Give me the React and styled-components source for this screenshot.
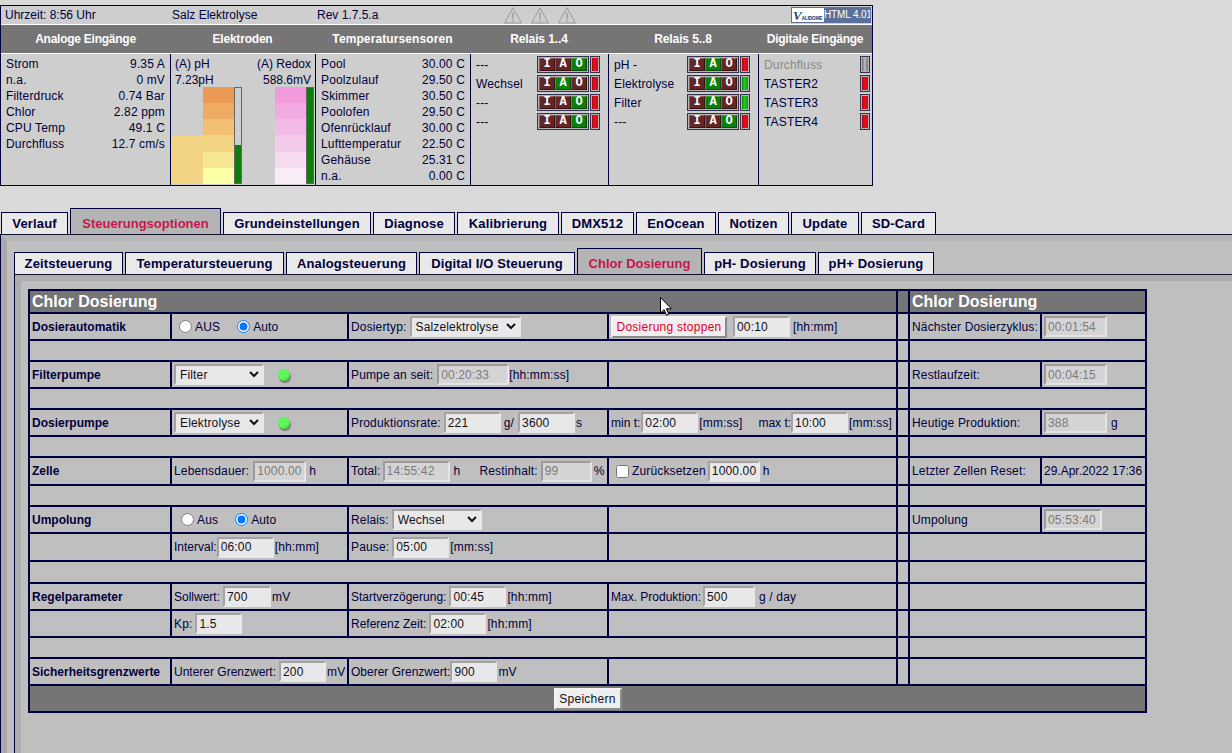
import React from "react";
import styled, { createGlobalStyle } from "styled-components";

const NAVY = "#00003c";

const Global = createGlobalStyle`
  html, body {
    margin: 0;
    height: 100%;
    overflow: hidden;
    background: #d9d9d9;
  }
  body {
    padding-top: 5px;
    box-sizing: border-box;
    font: 12px "Liberation Sans", Arial, sans-serif;
    color: ${NAVY};
  }
`;

/* ---------- status panel ---------- */

const StatusPanel = styled.div`
  width: 871px;
  height: 179px;
  border: 1px solid ${NAVY};
  background: #cecece;
`;

const columns = "169px 145px 155px 138px 150px 114px";

const InfoRow = styled.div`
  display: grid;
  grid-template-columns: ${columns};
  height: 18px;
  align-items: center;
  border-bottom: 1px solid #fff;
`;

const InfoText = styled.div`
  padding-left: ${(p) => p.$pad ?? 2}px;
`;

const Warnings = styled.div`
  display: flex;
  gap: 9px;
  padding-left: 34px;
`;

const Badge = styled.div`
  display: flex;
  justify-self: end;
  width: 78px;
  height: 14px;
  margin-right: 1px;
  border: 1px solid #5a7098;
  background: #fff;
  overflow: hidden;
`;

const BadgeLogo = styled.div`
  flex: 1;
  min-width: 0;
  display: flex;
  align-items: flex-end;
  padding-left: 1px;
  overflow: hidden;
  font-size: 5px;
  font-weight: bold;
  letter-spacing: -0.3px;
  line-height: 8px;
  color: #27406e;
  b {
    font: italic bold 13px/13px "Liberation Serif", serif;
  }
`;

const BadgeText = styled.div`
  flex: none;
  width: 46px;
  background: #5a7098;
  color: #fff;
  font-size: 10px;
  letter-spacing: -0.15px;
  line-height: 14px;
  text-align: center;
  white-space: nowrap;
`;

const HeadRow = styled.div`
  display: grid;
  grid-template-columns: ${columns};
  height: 28px;
  align-items: center;
  background: #757575;
  border-bottom: 1px solid #fff;
  color: #fff;
  font-weight: bold;
  text-align: center;
`;

const HeadLabel = styled.div`
  letter-spacing: ${(p) => p.$ls}px;
`;

const PanelBody = styled.div`
  display: grid;
  grid-template-columns: ${columns};
  height: 131px;
`;

const PanelCol = styled.div`
  box-sizing: border-box;
  border-left: ${(p) => (p.$first ? "none" : `1px solid ${NAVY}`)};
  padding: ${(p) => p.$pad || "2px 5px 0"};
  min-width: 0;
  letter-spacing: 0.15px;
`;

const ValueRow = styled.div`
  display: flex;
  justify-content: space-between;
  height: 16px;
  line-height: 16px;
`;

const ElectrodeCol = styled(PanelCol)`
  display: flex;
  flex-direction: column;
  letter-spacing: 0;
`;

const ElectrodeText = styled(ValueRow)`
  padding: 0 4px;
  line-height: 18px;
`;

const Gauges = styled.div`
  display: grid;
  grid-template-columns: 32px 31px 8px 33px 31px 8px;
  height: 97px;
`;

const Steps = styled.div`
  display: flex;
  flex-direction: column;
  justify-content: flex-end;
`;

const Step = styled.div`
  flex: ${(p) => (p.$fixed ? "none" : 1)};
  height: ${(p) => (p.$fixed ? "48px" : "auto")};
  background: ${(p) => p.$color};
`;

const Meter = styled.div`
  box-sizing: border-box;
  display: flex;
  align-items: flex-end;
  border: 1px solid #666;
  background: #cecece;
`;

const MeterFill = styled.div`
  width: 100%;
  background: #0a7f0a;
`;

const RelayList = styled.div`
  display: flex;
  flex-direction: column;
  gap: 2px;
`;

const RelayRow = styled.div`
  display: flex;
  justify-content: space-between;
  align-items: center;
  height: 17px;
  color: ${(p) => (p.$muted ? "#888" : NAVY)};
`;

const RelayControls = styled.div`
  display: flex;
  gap: 1px;
`;

const ModeBox = styled.div`
  box-sizing: border-box;
  display: flex;
  width: 52px;
  height: 17px;
  padding: 1px;
  border: 1px solid #33334f;
  background: #b4b4b4;
`;

const ModeKey = styled.div`
  box-sizing: border-box;
  flex: 1;
  height: 13px;
  border: 1px solid;
  border-color: ${(p) =>
    p.$on ? "#3fa03f #064c06 #064c06 #3fa03f" : "#8f5a5a #3a1212 #3a1212 #8f5a5a"};
  background: ${(p) => (p.$on ? "#0b7f0b" : "#622626")};
  color: #fff;
  font: bold 12px/11px "Liberation Mono", monospace;
  letter-spacing: 0;
  text-align: center;
`;

const LedBox = styled.div`
  box-sizing: border-box;
  width: 10px;
  height: 17px;
  padding: 1px;
  border: 1px solid #33334f;
  background: #b4b4b4;
`;

const ledColors = {
  red: "#a00a12, #ee0c1e 40%, #c80a16",
  green: "#0a8a0a, #22cc22 40%, #0e9a0e",
  gray: "#666, #b8b8b8 40%, #7a7a7a",
};

const LedBar = styled.div`
  height: 100%;
  background: linear-gradient(to right, ${(p) => ledColors[p.$color]});
`;

/* ---------- tabs ---------- */

const TabBar = styled.div`
  display: flex;
  align-items: flex-end;
  gap: 2px;
  height: ${(p) => p.$height}px;
  padding-left: ${(p) => p.$inset}px;
  margin-top: ${(p) => p.$top}px;
`;

const Tab = styled.div`
  box-sizing: border-box;
  width: ${(p) => p.$w}px;
  height: ${(p) => (p.$active ? 26 : 22)}px;
  border: 1px solid ${NAVY};
  border-bottom: none;
  background: ${(p) => (p.$active ? "#b4b4b4" : "#e9e9e9")};
  color: ${(p) => (p.$active ? "#c8144f" : NAVY)};
  font-size: 13px;
  font-weight: bold;
  letter-spacing: ${(p) => (p.$active ? 0 : 0.15)}px;
  line-height: ${(p) => (p.$active ? 30 : 22)}px;
  text-align: center;
  white-space: nowrap;
`;

const Frame = styled.div`
  border-top: 1px solid #10102a;
  border-left: 1px solid ${NAVY};
`;

const OuterBody = styled.div`
  height: 518px;
  box-sizing: border-box;
  border-top: 6px solid #b6b6b6;
  border-left: 6px solid #aaa;
  background: #bfbfbf;
  padding-left: 7px;
  overflow: hidden;
`;

const InnerBody = styled.div`
  height: 478px;
  box-sizing: border-box;
  border-top: 6px solid #adadad;
  border-left: 6px solid #adadad;
  background: #bfbfbf;
  padding: 8px 0 0 7px;
`;

/* ---------- dosing table ---------- */

const DoseGrid = styled.div`
  display: grid;
  width: 1119px;
  box-sizing: border-box;
  grid-template-columns: 140px 175px 258px 287px 10px 130px 103px;
  grid-template-rows: 21px 25px 19px 25px 19px 25px 19px 26px 19px 25px 26px 20px 25px 25px 19px 25px 25px;
  gap: 2px;
  padding: 2px;
  background: ${NAVY};
`;

const Cell = styled.div`
  display: flex;
  align-items: center;
  padding: 0 2px;
  min-width: 0;
  white-space: nowrap;
  background: #bfbfbf;
  letter-spacing: ${(p) => (p.$tight ? 0 : 0.15)}px;
  grid-column: ${(p) => p.$span || "auto"};
`;

const TitleCell = styled(Cell)`
  font-weight: bold;
  letter-spacing: 0;
`;

const GridHead = styled(Cell)`
  background: #757575;
  color: #fff;
  font-size: 16px;
  font-weight: bold;
  letter-spacing: 0;
`;

const GridFoot = styled(Cell)`
  grid-column: 1 / -1;
  justify-content: center;
  background: #757575;
`;

const Text = styled.span`
  margin-left: ${(p) => p.$ml || 0}px;
  letter-spacing: ${(p) => (p.$tight ? 0 : 0.15)}px;
`;

const Field = styled.input`
  box-sizing: border-box;
  width: ${(p) => p.$w}px;
  height: 21px;
  margin: 0 0 0 ${(p) => p.$ml ?? 3}px;
  padding: 0 2px;
  border: 2px solid;
  border-color: ${(p) =>
    p.disabled ? "#9b9b9b #e4e4e4 #e4e4e4 #9b9b9b" : "#a3a3a3 #e8e8e8 #e8e8e8 #a3a3a3"};
  background: ${(p) => (p.disabled ? "#d4d4d4" : "#e8e8e8")};
  color: ${(p) => (p.disabled ? "#7a7a7a" : "#10101a")};
  font: 12px "Liberation Sans", Arial, sans-serif;
  letter-spacing: 0.15px;
  opacity: 1;
`;

const Picker = styled.select`
  box-sizing: border-box;
  width: ${(p) => p.$w}px;
  height: 21px;
  margin: 0 0 0 ${(p) => p.$ml ?? 3}px;
  border: 2px solid;
  border-color: #a3a3a3 #e8e8e8 #e8e8e8 #a3a3a3;
  border-radius: 0;
  background-color: #e8e8e8;
  color: #10101a;
  font: 12px "Liberation Sans", Arial, sans-serif;
  letter-spacing: 0.15px;
`;

const RadioGroup = styled.label`
  display: flex;
  align-items: center;
  gap: 3px;
  margin-left: ${(p) => p.$ml}px;
  input {
    margin: 0;
  }
`;

const Tick = styled.input`
  width: 13px;
  height: 13px;
  margin: 0 3px 0 ${(p) => p.$ml}px;
`;

const Lamp = styled.span`
  width: 12px;
  height: 12px;
  margin-left: 14px;
  border-radius: 50%;
  background: radial-gradient(circle at 45% 40%, #5cf85c 0 50%, #38dc38 68%, #7f9f7f 90%);
  box-shadow: 1px 2px 1px #7a7a7a;
`;

const PushButton = styled.button`
  box-sizing: border-box;
  height: 22px;
  width: ${(p) => p.$w}px;
  padding: 0;
  border: 2px solid;
  border-color: #f4f4f4 #8c8c8c #8c8c8c #f4f4f4;
  background: #efefef;
  color: ${(p) => (p.$danger ? "#e4002b" : "#10101a")};
  font: 12px "Liberation Sans", Arial, sans-serif;
  letter-spacing: 0.25px;
`;

const Pointer = styled.svg`
  position: absolute;
  left: 660px;
  top: 297px;
`;

/* ---------- small parts ---------- */

const Warning = () => (
  <svg width="18" height="17" viewBox="0 0 18 17">
    <path d="M9 .8 17.4 16H.6Z" fill="none" stroke="#9a9a9a" />
    <path d="M9 5.5v6.5M9 13v1.6" stroke="#9a9a9a" strokeWidth="1.4" />
  </svg>
);

const Relay = ({ name, mode, led, muted }) => (
  <RelayRow $muted={muted}>
    <span>{name}</span>
    <RelayControls>
      <ModeBox>
        {["I", "A", "O"].map((key) => (
          <ModeKey key={key} $on={key === mode}>
            {key}
          </ModeKey>
        ))}
      </ModeBox>
      <LedBox>
        <LedBar $color={led} />
      </LedBox>
    </RelayControls>
  </RelayRow>
);

const Input = ({ value, w, ml, off }) => (
  <Field defaultValue={value} $w={w} $ml={ml} disabled={off} />
);

const Select = ({ value, w, ml }) => (
  <Picker defaultValue={value} $w={w} $ml={ml}>
    <option>{value}</option>
  </Picker>
);

const heads = [
  ["Analoge Eingänge", -0.25],
  ["Elektroden", -0.2],
  ["Temperatursensoren", 0.1],
  ["Relais 1..4", -0.1],
  ["Relais 5..8", -0.1],
  ["Digitale Eingänge", -0.25],
];

const analog = [
  ["Strom", "9.35 A"],
  ["n.a.", "0 mV"],
  ["Filterdruck", "0.74 Bar"],
  ["Chlor", "2.82 ppm"],
  ["CPU Temp", "49.1 C"],
  ["Durchfluss", "12.7 cm/s"],
];

const temps = [
  ["Pool", "30.00 C"],
  ["Poolzulauf", "29.50 C"],
  ["Skimmer", "30.50 C"],
  ["Poolofen", "29.50 C"],
  ["Ofenrücklauf", "30.00 C"],
  ["Lufttemperatur", "22.50 C"],
  ["Gehäuse", "25.31 C"],
  ["n.a.", "0.00 C"],
];

const relays1 = [
  ["---", "O", "red"],
  ["Wechsel", "A", "red"],
  ["---", "O", "red"],
  ["---", "O", "red"],
];

const relays2 = [
  ["pH -", "A", "red"],
  ["Elektrolyse", "A", "green"],
  ["Filter", "A", "green"],
  ["---", "O", "red"],
];

const inputsDigital = ["TASTER2", "TASTER3", "TASTER4"];

const phSteps = ["#eb9a56", "#eeab64", "#f1c073", "#f3d384", "#f6e795", "#fbffa8"];
const redoxSteps = ["#f19bdc", "#f0abe0", "#f2bbe5", "#f2cbe9", "#f5dcf0", "#f8ecf6"];

const mainTabs = [
  ["Verlauf", 67],
  ["Steuerungsoptionen", 151, true],
  ["Grundeinstellungen", 148],
  ["Diagnose", 82],
  ["Kalibrierung", 102],
  ["DMX512", 73],
  ["EnOcean", 80],
  ["Notizen", 71],
  ["Update", 68],
  ["SD-Card", 75],
];

const subTabs = [
  ["Zeitsteuerung", 109],
  ["Temperatursteuerung", 159],
  ["Analogsteuerung", 131],
  ["Digital I/O Steuerung", 156],
  ["Chlor Dosierung", 125, true],
  ["pH- Dosierung", 112],
  ["pH+ Dosierung", 116],
];

const GapRow = () => (
  <>
    <Cell $span="span 4" />
    <Cell />
    <Cell $span="span 2" />
  </>
);

const Side = ({ children }) => (
  <>
    <Cell />
    <Cell $span="span 2">{children}</Cell>
  </>
);

export default function App() {
  return (
    <>
      <Global />
      <StatusPanel>
        <InfoRow>
          <InfoText $pad={4}>Uhrzeit: 8:56 Uhr</InfoText>
          <InfoText>Salz Elektrolyse</InfoText>
          <InfoText>Rev 1.7.5.a</InfoText>
          <Warnings>
            <Warning />
            <Warning />
            <Warning />
          </Warnings>
          <span />
          <Badge>
            <BadgeLogo>
              <b>V</b>ALIDOME
            </BadgeLogo>
            <BadgeText>HTML 4.01</BadgeText>
          </Badge>
        </InfoRow>
        <HeadRow>
          {heads.map(([label, ls]) => (
            <HeadLabel key={label} $ls={ls}>
              {label}
            </HeadLabel>
          ))}
        </HeadRow>
        <PanelBody>
          <PanelCol $first>
            {analog.map(([label, value]) => (
              <ValueRow key={label}>
                <span>{label}</span>
                <span>{value}</span>
              </ValueRow>
            ))}
          </PanelCol>
          <ElectrodeCol $pad="1px 0 0">
            <ElectrodeText>
              <span>(A) pH</span>
              <span>(A) Redox</span>
            </ElectrodeText>
            <ElectrodeText>
              <span>7.23pH</span>
              <span>588.6mV</span>
            </ElectrodeText>
            <Gauges>
              <Steps>
                <Step $fixed $color="#f3d384" />
              </Steps>
              <Steps>
                {phSteps.map((color) => (
                  <Step key={color} $color={color} />
                ))}
              </Steps>
              <Meter>
                <MeterFill style={{ height: "40%" }} />
              </Meter>
              <span />
              <Steps>
                {redoxSteps.map((color) => (
                  <Step key={color} $color={color} />
                ))}
              </Steps>
              <Meter>
                <MeterFill style={{ height: "100%" }} />
              </Meter>
            </Gauges>
          </ElectrodeCol>
          <PanelCol>
            {temps.map(([label, value], i) => (
              <ValueRow key={i}>
                <span>{label}</span>
                <span>{value}</span>
              </ValueRow>
            ))}
          </PanelCol>
          <PanelCol $pad="2px 8px 0 5px">
            <RelayList>
              {relays1.map(([name, mode, led], i) => (
                <Relay key={i} name={name} mode={mode} led={led} />
              ))}
            </RelayList>
          </PanelCol>
          <PanelCol $pad="2px 8px 0 5px">
            <RelayList>
              {relays2.map(([name, mode, led], i) => (
                <Relay key={i} name={name} mode={mode} led={led} />
              ))}
            </RelayList>
          </PanelCol>
          <PanelCol $pad="2px 2px 0 5px">
            <RelayList>
              <RelayRow $muted>
                <span>Durchfluss</span>
                <LedBox>
                  <LedBar $color="gray" />
                </LedBox>
              </RelayRow>
              {inputsDigital.map((name) => (
                <RelayRow key={name}>
                  <span>{name}</span>
                  <LedBox>
                    <LedBar $color="red" />
                  </LedBox>
                </RelayRow>
              ))}
            </RelayList>
          </PanelCol>
        </PanelBody>
      </StatusPanel>

      <TabBar $height={26} $inset={1} $top={22}>
        {mainTabs.map(([label, w, active]) => (
          <Tab key={label} $w={w} $active={active}>
            {label}
          </Tab>
        ))}
      </TabBar>
      <Frame>
        <OuterBody>
          <TabBar $height={26} $inset={0} $top={7}>
            {subTabs.map(([label, w, active]) => (
              <Tab key={label} $w={w} $active={active}>
                {label}
              </Tab>
            ))}
          </TabBar>
          <Frame>
            <InnerBody>
              <DoseGrid>
                <GridHead $span="span 4">Chlor Dosierung</GridHead>
                <GridHead />
                <GridHead $span="span 2">Chlor Dosierung</GridHead>

                <TitleCell>Dosierautomatik</TitleCell>
                <Cell>
                  <RadioGroup $ml={5}>
                    <input type="radio" name="dose" />
                    AUS
                  </RadioGroup>
                  <RadioGroup $ml={17}>
                    <input type="radio" name="dose" defaultChecked />
                    Auto
                  </RadioGroup>
                </Cell>
                <Cell>
                  Dosiertyp:
                  <Select value="Salzelektrolyse" w={111} />
                </Cell>
                <Cell>
                  <PushButton $danger $w={116}>
                    Dosierung stoppen
                  </PushButton>
                  <Input value="00:10" w={57} ml={6} />
                  <Text $ml={3}>[hh:mm]</Text>
                </Cell>
                <Cell />
                <Cell>Nächster Dosierzyklus:</Cell>
                <Cell>
                  <Input value="00:01:54" w={63} ml={0} off />
                </Cell>

                <GapRow />

                <TitleCell>Filterpumpe</TitleCell>
                <Cell>
                  <Select value="Filter" w={90} ml={0} />
                  <Lamp />
                </Cell>
                <Cell>
                  Pumpe an seit:
                  <Input value="00:20:33" w={72} ml={4} off />
                  <Text>[hh:mm:ss]</Text>
                </Cell>
                <Cell />
                <Cell />
                <Cell>Restlaufzeit:</Cell>
                <Cell>
                  <Input value="00:04:15" w={63} ml={0} off />
                </Cell>

                <GapRow />

                <TitleCell>Dosierpumpe</TitleCell>
                <Cell>
                  <Select value="Elektrolyse" w={90} ml={0} />
                  <Lamp />
                </Cell>
                <Cell>
                  Produktionsrate:
                  <Input value="221" w={57} ml={3} />
                  <Text $ml={3}>g/</Text>
                  <Input value="3600" w={57} ml={4} />
                  <Text $ml={1}>s</Text>
                </Cell>
                <Cell $tight>
                  min t:
                  <Input value="02:00" w={57} ml={1} />
                  <Text $ml={1}>[mm:ss]</Text>
                  <Text $ml={16} $tight>
                    max t:
                  </Text>
                  <Input value="10:00" w={57} ml={0} />
                  <Text $ml={1}>[mm:ss]</Text>
                </Cell>
                <Cell />
                <Cell>Heutige Produktion:</Cell>
                <Cell>
                  <Input value="388" w={63} ml={0} off />
                  <Text $ml={4}>g</Text>
                </Cell>

                <GapRow />

                <TitleCell>Zelle</TitleCell>
                <Cell>
                  Lebensdauer:
                  <Input value="1000.00" w={53} ml={4} off />
                  <Text $ml={3}>h</Text>
                </Cell>
                <Cell>
                  Total:
                  <Input value="14:55:42" w={67} ml={2} off />
                  <Text $ml={4}>h</Text>
                  <Text $ml={19}>Restinhalt:</Text>
                  <Input value="99" w={51} ml={3} off />
                  <Text $ml={2}>%</Text>
                </Cell>
                <Cell>
                  <Tick type="checkbox" $ml={5} />
                  Zurücksetzen
                  <Input value="1000.00" w={52} ml={2} />
                  <Text $ml={3}>h</Text>
                </Cell>
                <Cell />
                <Cell>Letzter Zellen Reset:</Cell>
                <Cell $tight>29.Apr.2022 17:36</Cell>

                <GapRow />

                <TitleCell>Umpolung</TitleCell>
                <Cell>
                  <RadioGroup $ml={7}>
                    <input type="radio" name="flip" />
                    Aus
                  </RadioGroup>
                  <RadioGroup $ml={17}>
                    <input type="radio" name="flip" defaultChecked />
                    Auto
                  </RadioGroup>
                </Cell>
                <Cell>
                  Relais:
                  <Select value="Wechsel" w={90} />
                </Cell>
                <Cell />
                <Cell />
                <Cell>Umpolung</Cell>
                <Cell>
                  <Input value="05:53:40" w={58} ml={0} off />
                </Cell>

                <Cell />
                <Cell $tight>
                  Interval:
                  <Input value="06:00" w={57} ml={0} />
                  <Text $ml={1}>[hh:mm]</Text>
                </Cell>
                <Cell>
                  Pause:
                  <Input value="05:00" w={57} />
                  <Text $ml={1}>[mm:ss]</Text>
                </Cell>
                <Cell />
                <Side />

                <GapRow />

                <TitleCell>Regelparameter</TitleCell>
                <Cell $tight>
                  Sollwert:
                  <Input value="700" w={48} />
                  <Text $ml={1}>mV</Text>
                </Cell>
                <Cell $tight>
                  Startverzögerung:
                  <Input value="00:45" w={57} />
                  <Text $ml={1}>[hh:mm]</Text>
                </Cell>
                <Cell $tight>
                  Max. Produktion:
                  <Input value="500" w={52} ml={2} />
                  <Text $ml={4}>g / day</Text>
                </Cell>
                <Side />

                <Cell />
                <Cell>
                  Kp:
                  <Input value="1.5" w={47} />
                </Cell>
                <Cell $tight>
                  Referenz Zeit:
                  <Input value="02:00" w={57} />
                  <Text $ml={1}>[hh:mm]</Text>
                </Cell>
                <Cell />
                <Side />

                <GapRow />

                <TitleCell>Sicherheitsgrenzwerte</TitleCell>
                <Cell $tight>
                  Unterer Grenzwert:
                  <Input value="200" w={47} />
                  <Text $ml={1}>mV</Text>
                </Cell>
                <Cell $tight>
                  Oberer Grenzwert:
                  <Input value="900" w={47} ml={0} />
                  <Text $ml={1}>mV</Text>
                </Cell>
                <Cell />
                <Side />

                <GridFoot>
                  <PushButton $w={68}>Speichern</PushButton>
                </GridFoot>
              </DoseGrid>
            </InnerBody>
          </Frame>
        </OuterBody>
      </Frame>

      <Pointer width="12" height="19" viewBox="0 0 12 19">
        <path d="M.5.5v15.5l3.6-3.4 2.4 5.6 2.3-1-2.4-5.4h5Z" fill="#fff" stroke="#000" />
      </Pointer>
    </>
  );
}
